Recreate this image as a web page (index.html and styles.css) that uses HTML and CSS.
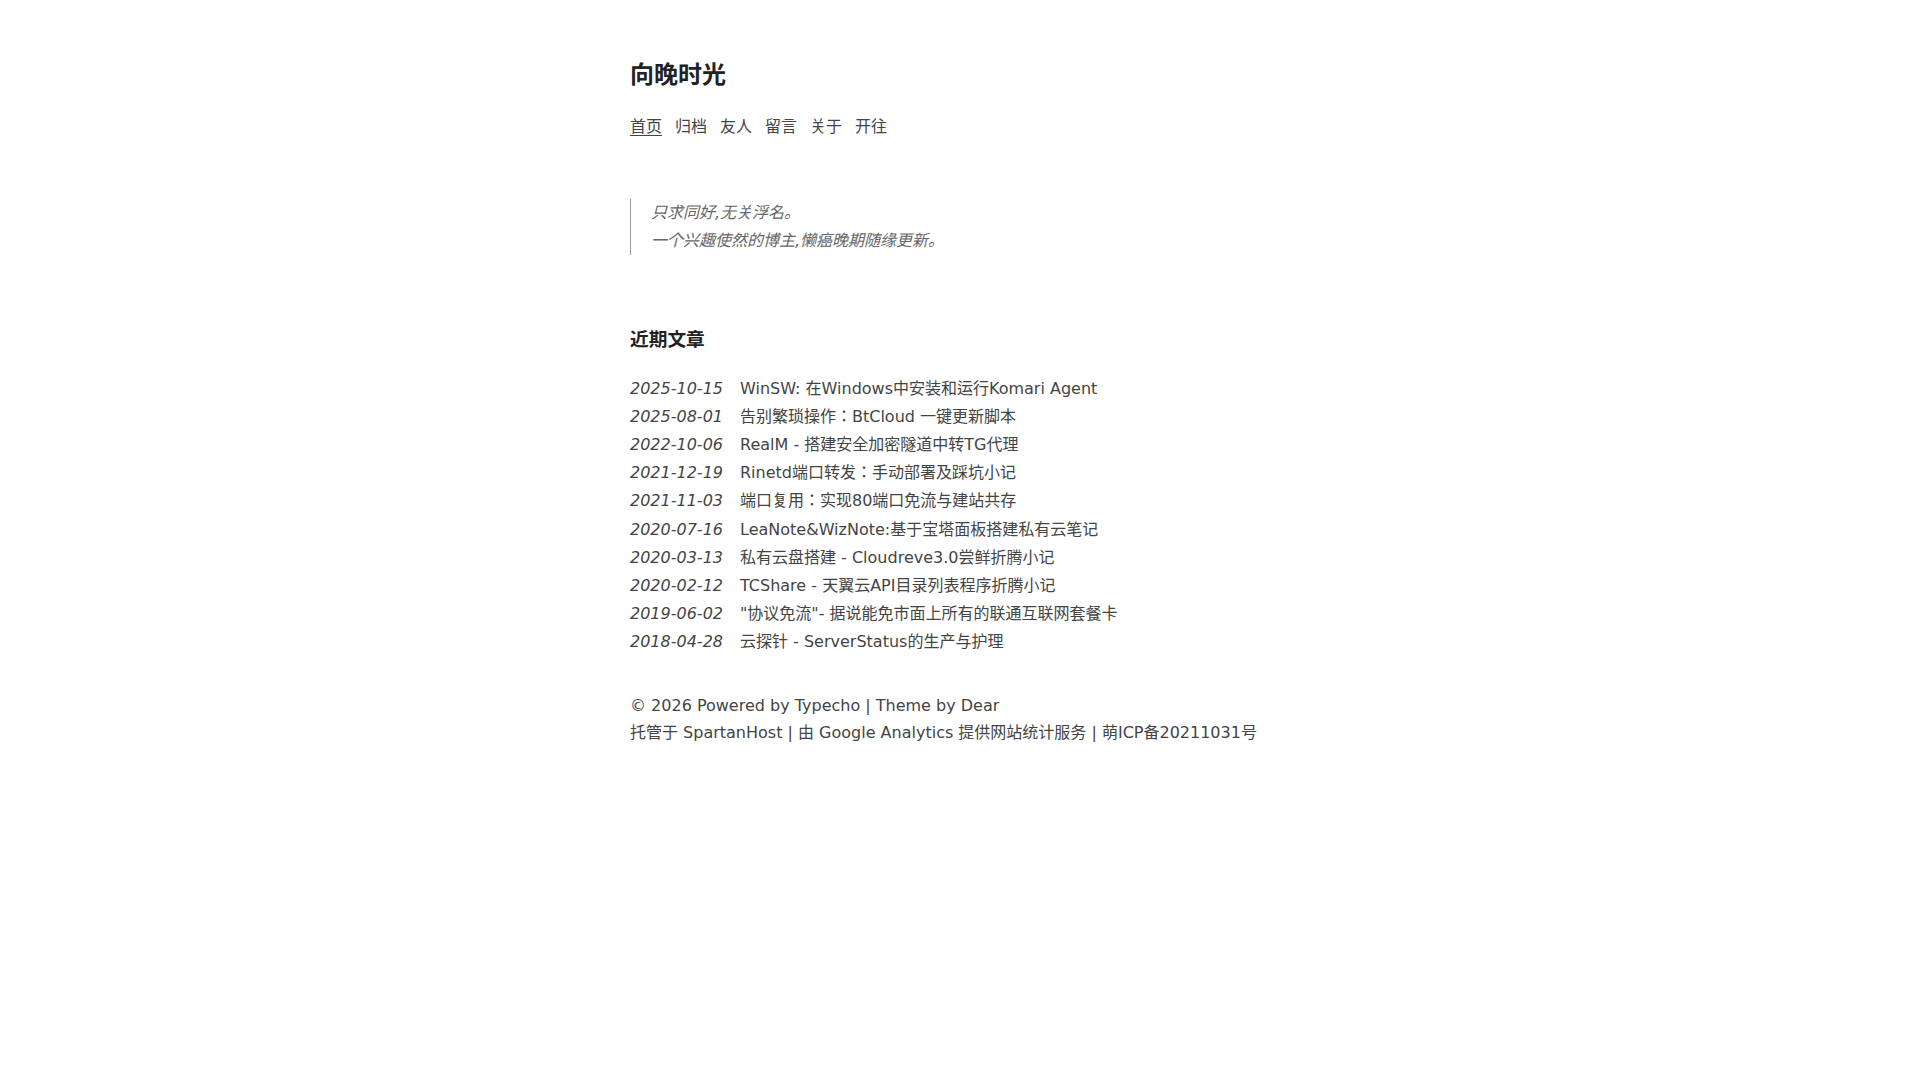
FILE: index.html
```html
<!DOCTYPE html>
<html>
<head>
<meta charset="utf-8">
<title>向晚时光</title>
<link rel="stylesheet" href="styles.css">
</head>
<body>
<div class="page">
  <header class="site-header">
    <a class="title" href="#">向晚时光</a>
    <nav class="nav">
      <a href="#" class="current">首页</a>
      <a href="#">归档</a>
      <a href="#">友人</a>
      <a href="#">留言</a>
      <a href="#">关于</a>
      <a href="#">开往</a>
    </nav>
  </header>
  <main>
    <blockquote class="motto">
      <p>只求同好,无关浮名。</p>
      <p>一个兴趣使然的博主,懒癌晚期随缘更新。</p>
    </blockquote>
    <h3 class="section-title">近期文章</h3>
    <ul class="posts">
      <li><span class="date">2025-10-15</span><a href="#">WinSW: 在Windows中安装和运行Komari Agent</a></li>
      <li><span class="date">2025-08-01</span><a href="#">告别繁琐操作：BtCloud 一键更新脚本</a></li>
      <li><span class="date">2022-10-06</span><a href="#">RealM - 搭建安全加密隧道中转TG代理</a></li>
      <li><span class="date">2021-12-19</span><a href="#">Rinetd端口转发：手动部署及踩坑小记</a></li>
      <li><span class="date">2021-11-03</span><a href="#">端口复用：实现80端口免流与建站共存</a></li>
      <li><span class="date">2020-07-16</span><a href="#">LeaNote&amp;WizNote:基于宝塔面板搭建私有云笔记</a></li>
      <li><span class="date">2020-03-13</span><a href="#">私有云盘搭建 - Cloudreve3.0尝鲜折腾小记</a></li>
      <li><span class="date">2020-02-12</span><a href="#">TCShare - 天翼云API目录列表程序折腾小记</a></li>
      <li><span class="date">2019-06-02</span><a href="#">"协议免流"- 据说能免市面上所有的联通互联网套餐卡</a></li>
      <li><span class="date">2018-04-28</span><a href="#">云探针 - ServerStatus的生产与护理</a></li>
    </ul>
  </main>
  <footer class="footer">
    <p>© 2026 Powered by <a href="#">Typecho</a> | Theme by <a href="#">Dear</a></p>
    <p>托管于 <a href="#">SpartanHost</a> | 由 <a href="#">Google Analytics</a> 提供网站统计服务 | <a href="#">萌ICP备20211031号</a></p>
  </footer>
</div>
</body>
</html>
```

FILE: styles.css
```css
html, body {
  margin: 0;
  padding: 0;
  background: #fff;
}

body {
  font-family: "DejaVu Sans", "Noto Sans CJK JP", sans-serif;
  font-size: 16px;
  line-height: 1.76;
  color: #444;
}

a {
  color: inherit;
  text-decoration: none;
}

.page {
  width: 660px;
  margin: 0 auto;
  padding-top: 58px;
}

.site-header {
  display: flex;
  flex-direction: column;
  align-items: flex-start;
}

.title {
  font-size: 24px;
  line-height: 34px;
  font-weight: bold;
  color: #222;
}

.nav {
  display: flex;
  margin-top: 24px;
  line-height: 22.5px;
}

.nav a {
  margin-right: 13px;
}

.nav a.current {
  text-decoration: underline;
  text-underline-offset: 3px;
}

.motto {
  margin: 60px 0 0 0;
  padding: 0 0 0 20px;
  border-left: 1px solid #999;
  color: #666;
  font-style: italic;
  line-height: 28px;
}

.motto p {
  margin: 0;
}

.section-title {
  margin: 70px 0 0 0;
  font-size: 18.72px;
  line-height: 29px;
  font-weight: bold;
  color: #222;
}

.posts {
  list-style: none;
  margin: 21px 0 0 0;
  padding: 0;
}

.posts li {
  display: flex;
  line-height: 28.2px;
}

.posts .date {
  flex: 0 0 110px;
  font-style: italic;
}

.footer {
  margin-top: 35.5px;
  line-height: 27px;
}

.footer p {
  margin: 0;
}
```
